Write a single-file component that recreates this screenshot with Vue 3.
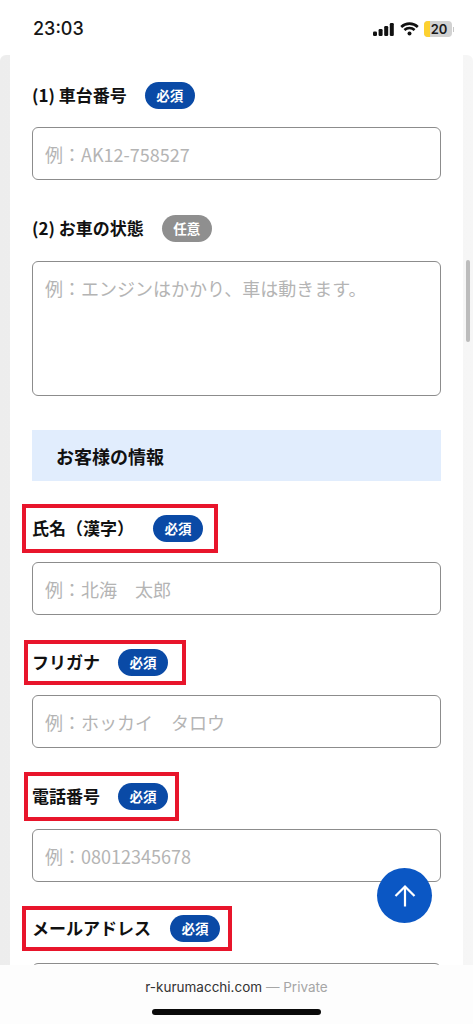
<script setup>
const required = '必須'
</script>

<template>
  <div class="phone">
    <header class="status">
      <span class="time">23:03</span>
      <div class="status-icons">
        <svg class="signal" width="21" height="13" viewBox="0 0 21 13">
          <rect x="0" y="8.5" width="4" height="4.5" rx="1.2" />
          <rect x="5.6" y="6" width="4" height="7" rx="1.2" />
          <rect x="11.2" y="3" width="4" height="10" rx="1.2" />
          <rect x="16.8" y="0" width="4" height="13" rx="1.2" />
        </svg>
        <svg class="wifi" width="19" height="14" viewBox="0 0 19 14">
          <path d="M1.2 5 A12 12 0 0 1 17.8 5" />
          <path d="M4.4 8 A7.5 7.5 0 0 1 14.6 8" />
          <circle cx="9.5" cy="11.6" r="2" />
        </svg>
        <div class="battery"><span class="battery-fill"></span><span class="battery-num">20</span></div>
        <span class="battery-cap"></span>
      </div>
    </header>

    <div class="page">
      <main class="card">
        <div class="plain-row first">
          <span class="label">(1) 車台番号</span>
          <span class="badge gap-18">{{ required }}</span>
        </div>
        <input class="field f-first" placeholder="例：AK12-758527" />

        <div class="plain-row second">
          <span class="label">(2) お車の状態</span>
          <span class="badge optional gap-18">任意</span>
        </div>
        <textarea class="field area" placeholder="例：エンジンはかかり、車は動きます。"></textarea>

        <h2 class="section">お客様の情報</h2>

        <div class="marked m-name">
          <span class="label">氏名（漢字）</span>
          <span class="badge gap-19">{{ required }}</span>
        </div>
        <input class="field f-name" placeholder="例：北海　太郎" />

        <div class="marked m-kana">
          <span class="label">フリガナ</span>
          <span class="badge gap-18">{{ required }}</span>
        </div>
        <input class="field f-kana" placeholder="例：ホッカイ　タロウ" />

        <div class="marked m-tel">
          <span class="label">電話番号</span>
          <span class="badge gap-18">{{ required }}</span>
        </div>
        <input class="field f-tel" placeholder="例：08012345678" />

        <div class="marked m-mail">
          <span class="label">メールアドレス</span>
          <span class="badge gap-19">{{ required }}</span>
        </div>
        <input class="field f-mail" />
      </main>
      <span class="scrollbar"></span>
    </div>

    <button class="to-top" aria-label="ページ上部へ">
      <svg width="24" height="24" viewBox="0 0 24 24">
        <path d="M12 22.5V3M2.5 12 12 2.5 21.5 12" />
      </svg>
    </button>

    <footer class="address">
      <p class="address-text"><span class="domain">r-kurumacchi.com</span> — Private</p>
      <span class="home"></span>
    </footer>
  </div>
</template>

<style>
html, body { margin: 0; background: #fff; }
</style>

<style scoped>
.phone {
  position: relative;
  width: 473px;
  height: 1024px;
  overflow: hidden;
  display: flex;
  flex-direction: column;
  background: #fff;
  font-family: "Noto Sans CJK JP", "Noto Sans", sans-serif;
  color: #111;
}

.status {
  height: 55px;
  flex: none;
  display: flex;
  justify-content: space-between;
  align-items: flex-start;
  padding: 17px 19px 0 33px;
  box-sizing: border-box;
  background: #fff;
}
.time {
  font-family: Inter, sans-serif;
  font-size: 18px;
  font-weight: 500;
  line-height: 24px;
  color: #161616;
}
.status-icons {
  display: flex;
  align-items: center;
  height: 24px;
}
.signal rect { fill: #111; }
.wifi { margin-left: 6px; }
.wifi path { fill: none; stroke: #111; stroke-width: 2.6; }
.wifi circle { fill: #111; }
.battery {
  position: relative;
  width: 28px;
  height: 16px;
  margin-left: 5px;
  border-radius: 4px;
  background: #d2d2d2;
  overflow: hidden;
  display: flex;
  align-items: center;
  justify-content: center;
}
.battery-fill {
  position: absolute;
  left: 0;
  top: 0;
  bottom: 0;
  width: 6px;
  background: #fdd130;
}
.battery-num {
  position: relative;
  font-family: Inter, sans-serif;
  font-size: 13px;
  font-weight: 600;
  color: #1a1a1a;
  padding-left: 2px;
}
.battery-cap {
  width: 1px;
  height: 5px;
  margin-left: 1px;
  background: #c8c8c8;
}

.page {
  position: relative;
  flex: 1;
  min-height: 0;
  padding: 0 10px;
  background: linear-gradient(90deg, #ededed 0, #f6f6f6 100%);
  border-radius: 6px 6px 0 0;
}
.card {
  background: #fff;
  width: 453px;
  height: 100%;
  padding: 0 32px 0 22px;
  box-sizing: border-box;
  display: flex;
  flex-direction: column;
  align-items: flex-start;
}
.plain-row {
  display: flex;
  align-items: center;
  height: 27px;
}
.first { margin-top: 27px; }
.second { margin-top: 35px; }

.label {
  font-size: 17px;
  font-weight: 700;
  line-height: 25px;
  padding-bottom: 2px;
  color: #111;
  white-space: nowrap;
}
.badge {
  flex: none;
  width: 50px;
  height: 27px;
  border-radius: 14px;
  background: #0a4aa6;
  color: #fff;
  font-size: 13.5px;
  font-weight: 700;
  line-height: 27px;
  text-align: center;
}
.optional { background: #8f8f8f; }
.gap-18 { margin-left: 18px; }
.gap-19 { margin-left: 19px; }

.field {
  display: block;
  width: 409px;
  height: 53px;
  box-sizing: border-box;
  padding: 0 12px;
  border: 1px solid #8c8c8c;
  border-radius: 6px;
  background: #fff;
  font-family: "Noto Sans CJK JP", "Noto Sans", sans-serif;
  font-size: 18px;
  outline: none;
  resize: none;
}
.field::placeholder { color: #b4b4b4; opacity: 1; }
.f-first { margin-top: 18px; }
.area {
  height: 135px;
  margin-top: 19px;
  padding-top: 12px;
  line-height: 29px;
}
.section {
  width: 409px;
  height: 51px;
  box-sizing: border-box;
  margin: 34px 0 0 0;
  padding: 1px 0 0 24px;
  background: #e1edfd;
  font-size: 18px;
  font-weight: 700;
  line-height: 50px;
  color: #111;
}
.marked {
  display: flex;
  align-items: center;
  box-sizing: border-box;
  border: 4px solid #e8152b;
  background: #fff;
}
.m-name { width: 196px; height: 49px; margin: 23px 0 0 -10px; padding-left: 6px; }
.f-name { margin-top: 9px; }
.m-kana { width: 162px; height: 45px; margin: 25px 0 0 -8px; padding-left: 4px; }
.f-kana { margin-top: 10px; }
.m-tel { width: 155px; height: 49px; margin: 24px 0 0 -8px; padding-left: 4px; }
.f-tel { margin-top: 8px; }
.m-mail { width: 210px; height: 45px; margin: 24px 0 0 -10px; padding-left: 6px; }
.f-mail { margin-top: 12px; }

.scrollbar {
  position: absolute;
  right: 3px;
  top: 205px;
  width: 4px;
  height: 82px;
  border-radius: 2px;
  background: #bcbcbc;
}

.to-top {
  position: absolute;
  left: 377px;
  top: 868px;
  width: 55px;
  height: 55px;
  padding: 0;
  border: none;
  border-radius: 50%;
  background: #0b57c4;
  display: flex;
  align-items: center;
  justify-content: center;
}
.to-top path {
  fill: none;
  stroke: #fff;
  stroke-width: 2.2;
}

.address {
  position: absolute;
  left: 0;
  right: 0;
  bottom: 0;
  height: 59px;
  background: #fdfdfd;
  display: flex;
  flex-direction: column;
  align-items: center;
}
.address-text {
  margin: 13px 0 0 0;
  font-family: Inter, sans-serif;
  font-size: 13.5px;
  line-height: 18px;
  color: #a6a6a6;
}
.domain { color: #333; }
.home {
  width: 169px;
  height: 6px;
  margin-top: 13px;
  border-radius: 3px;
  background: #0a0a0a;
}
</style>
